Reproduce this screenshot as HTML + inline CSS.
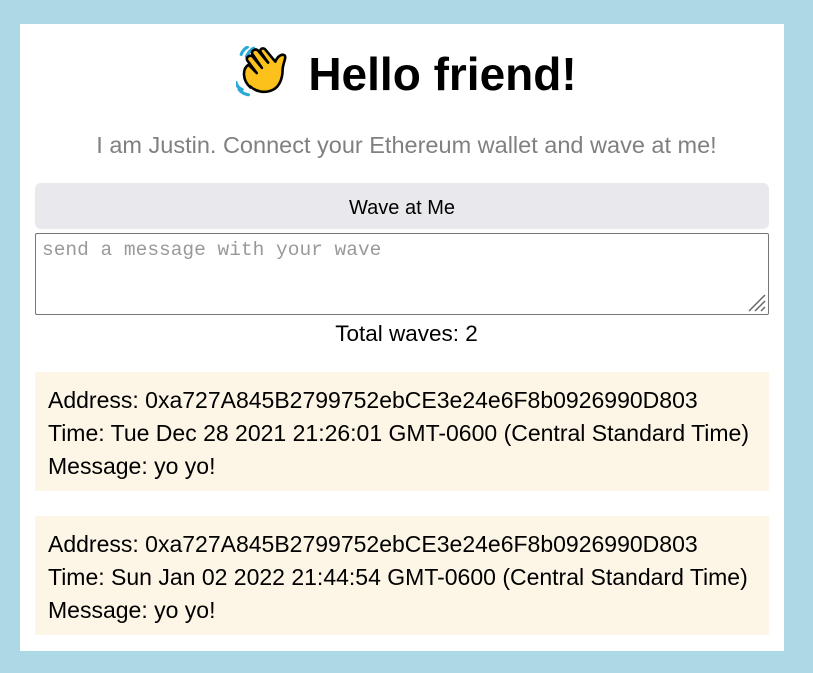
<!DOCTYPE html>
<html><head><meta charset="utf-8"><style>
body{margin:0;width:813px;height:673px;background:#add8e6;font-family:"Liberation Sans",sans-serif;overflow:hidden}
.panel{position:absolute;left:20px;top:24px;width:764px;height:627px;background:#fff}
h1{position:absolute;left:0;right:0;top:45px;margin:0;text-align:center;font-size:46px;font-weight:bold;line-height:58px;color:#000}
h1 svg{vertical-align:-8px;margin-right:14px}
.sub{position:absolute;left:0;right:0;top:132px;text-align:center;font-size:23.5px;color:#808080}
.btn{position:absolute;left:35px;top:183px;width:734px;height:46px;background:#e9e9ed;border-radius:6px;text-align:center;line-height:50px;font-size:20px}
.ta{position:absolute;left:35px;top:233px;width:732px;height:80px;border:1px solid #767676;border-radius:2px;background:#fff}
.ta span{position:absolute;left:6px;top:5px;font-family:"Liberation Mono",monospace;font-size:19.5px;color:#999}
.grip{position:absolute;right:2px;bottom:2px}
.tot{position:absolute;left:0;right:0;top:321px;text-align:center;font-size:22.5px}
.card{position:absolute;left:35px;width:708px;height:95px;padding:12px 13px;background:#fdf5e6;font-size:23px;line-height:33px;white-space:nowrap}
</style></head><body>
<div class="panel"></div>
<h1><svg width="58" height="52" viewBox="0 0 56 50"><path d="M10 10q3-6 7-8M5 8q2-5 6-7M6 42q-5-2-6-7M12 47q-6-1-9-5" stroke="#29a9d6" stroke-width="3" fill="none" stroke-linecap="round"/><path d="M14 40C6 33 6 22 12 18L20 26 11 14c-2-3 2-6 5-4l9 11-9-13c-2-3 2-6 5-4l10 12-7-10c-2-3 2-5 4-3l10 12c2-5 6-8 9-6 2 2-2 8-2 14 0 8-3 16-9 19-8 4-17 2-22-3z" fill="#fcc21b" stroke="#000" stroke-width="2.5" stroke-linejoin="round"/></svg>Hello friend!</h1>
<div class="sub">I am Justin. Connect your Ethereum wallet and wave at me!</div>
<div class="btn">Wave at Me</div>
<div class="ta"><span>send a message with your wave</span><svg class="grip" width="22" height="22" viewBox="0 0 22 22"><path d="M21 5L5 21M21 11L11 21M21 17L17 21" stroke="#666" stroke-width="1.5"/></svg></div>
<div class="tot">Total waves: 2</div>
<div class="card" style="top:372px">Address: 0xa727A845B2799752ebCE3e24e6F8b0926990D803<br>Time: Tue Dec 28 2021 21:26:01 GMT-0600 (Central Standard Time)<br>Message: yo yo!</div>
<div class="card" style="top:516px">Address: 0xa727A845B2799752ebCE3e24e6F8b0926990D803<br>Time: Sun Jan 02 2022 21:44:54 GMT-0600 (Central Standard Time)<br>Message: yo yo!</div>
</body></html>
